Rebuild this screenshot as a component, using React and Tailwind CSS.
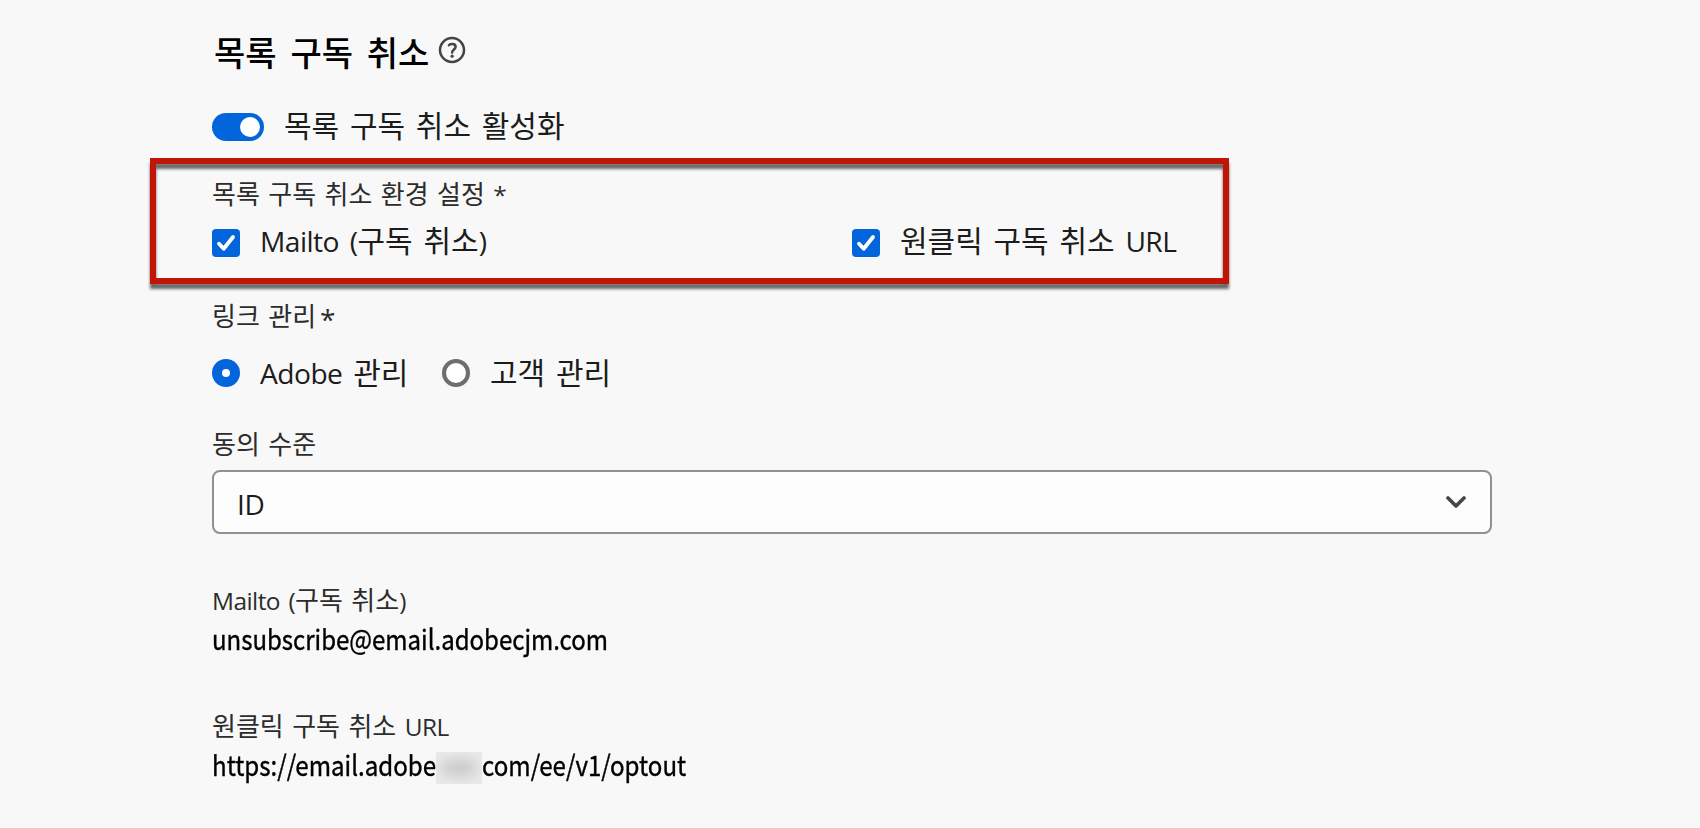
import React from "react";

const ko = "font-['Noto_Sans_CJK_KR',sans-serif] whitespace-pre";
const latin = "font-['Open_Sans','Noto_Sans',sans-serif] whitespace-pre text-[0.94em] leading-none tracking-[-0.55px]";
const label = `${ko} h-8 text-[26px] leading-[32px] [word-spacing:2.6px] text-[#2c2c2c]`;
const item = `${ko} text-[30px] leading-[36px] h-9 [word-spacing:4px] text-[#1c1c1c]`;
const value = `${ko} h-9 text-[28px] leading-9 text-black [-webkit-text-stroke:0.4px_black]`;

function Checkbox({ children }) {
  return (
    <label className="flex w-[640px] items-center">
      <span className="flex size-7 shrink-0 items-center justify-center rounded-[4px] bg-[#0265dc]">
        <svg viewBox="0 0 28 28" className="size-7" fill="none" stroke="#fff" strokeWidth="3.8" strokeLinecap="round" strokeLinejoin="round">
          <path d="M7 14.7 11.7 19.8 21 8" />
        </svg>
      </span>
      <span className={`${item} mb-2 ml-5`}>{children}</span>
    </label>
  );
}

export default function App() {
  return (
    <main className="relative h-[828px] w-[1700px] overflow-hidden bg-[#f8f8f8] pl-[212px] pt-[29px]">
      <header className="flex h-[46px] items-center">
        <h1 className={`${ko} ml-0.5 text-[34px] font-medium leading-[46px] text-black [word-spacing:6.2px]`}>목록 구독 취소</h1>
        <svg viewBox="0 0 28 28" className="ml-[9px] size-7 -translate-y-0.5" fill="none" stroke="#444" strokeWidth="2.5" strokeLinecap="round">
          <circle cx="14" cy="14" r="12" />
          <path d="M10.9 9.3C11.6 7.9 17.6 6.9 17.6 10.9 17.6 13.3 14.1 13.6 14.1 16.4" />
          <circle cx="14.1" cy="20.2" r="1.6" fill="#444" stroke="none" />
        </svg>
      </header>

      <div className="mt-[34px] flex h-9 items-center">
        <span className="flex h-7 w-[52px] items-center justify-end rounded-full bg-[#0265dc] pr-1">
          <span className="size-5 rounded-full bg-white" />
        </span>
        <span className={`${item} mb-1.5 ml-5`}>목록 구독 취소 활성화</span>
      </div>

      <section className="mt-8 h-[86px]">
        <p className={label}>
          목록 구독 취소 환경 설정 <span className={latin}>*</span>
        </p>
        <div className="mt-[16px] flex h-9 items-center">
          <Checkbox><span className={latin}>Mailto (</span>구독 취소<span className={latin}>)</span></Checkbox>
          <Checkbox>원클릭 구독 취소 <span className={latin}>URL</span></Checkbox>
        </div>
      </section>

      <section className="mt-[36px]">
        <p className={`${label} flex`}>링크 관리<span className="ml-1 mt-1 font-['Open_Sans',sans-serif] text-[28px] leading-8">*</span></p>
        <div className="mt-[24px] flex h-9 items-center">
          <span className="flex size-7 items-center justify-center rounded-full bg-[#0265dc]"><span className="size-2 rounded-full bg-white" /></span>
          <span className={`${item} mb-1 ml-5 w-[182px]`}><span className={latin}>Adobe </span>관리</span>
          <span className="size-7 rounded-full border-4 border-[#6e6e6e] bg-white" />
          <span className={`${item} mb-1 ml-5`}>고객 관리</span>
        </div>
      </section>

      <section className="mt-[36px]">
        <p className={label}>동의 수준</p>
        <div className="mt-[11px] flex h-16 w-[1280px] items-center justify-between rounded-lg border-2 border-[#909090] bg-[#fdfdfd] pl-[23px] pr-[24px]">
          <span className="mt-1 font-['Open_Sans',sans-serif] text-[28px] leading-9 tracking-[-0.4px] text-[#1c1c1c]">ID</span>
          <svg viewBox="0 0 20 12" className="h-3 w-5" fill="none" stroke="#464646" strokeWidth="3.6" strokeLinecap="round" strokeLinejoin="round">
            <path d="M2 2 10 10 18 2" />
          </svg>
        </div>
      </section>

      <section className="mt-[49px]">
        <p className={label}><span className={latin}>Mailto (</span>구독 취소<span className={latin}>)</span></p>
        <p className={`${value} mt-[5px] origin-left scale-x-[0.857]`}>unsubscribe@email.adobecjm.com</p>
      </section>

      <section className="mt-[53px]">
        <p className={label}>원클릭 구독 취소 <span className={latin}>URL</span></p>
        <p className={`${value} mt-[5px] flex items-center`}>
          <span className="w-[224px] origin-left scale-x-[0.861]">https://email.adobe</span>
          <span className="mt-2 flex h-8 w-[46px] shrink-0 items-center justify-center overflow-hidden bg-[#ebebeb]">
            <span className="h-4 w-9 rounded-full bg-[#c6c6c6] blur-[7px]" />
          </span>
          <span className="origin-left scale-x-[0.861]">com/ee/v1/optout</span>
        </p>
      </section>

      <div className="pointer-events-none absolute left-[150px] top-[158px] h-[126px] w-[1079px] border-[6px] border-[#c11507] drop-shadow-[0_5px_1.5px_rgba(0,0,0,0.58)]" />
    </main>
  );
}
